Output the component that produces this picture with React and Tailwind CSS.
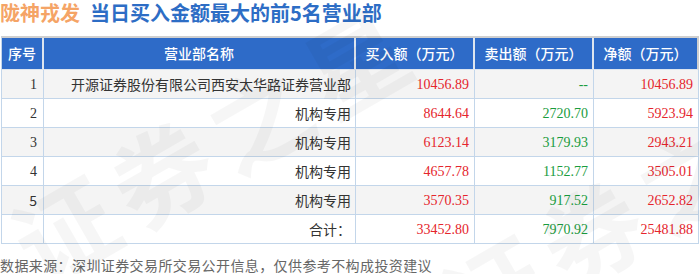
import React from "react";

const rows = [
  { no: "1", name: "开源证券股份有限公司西安太华路证券营业部", buy: "10456.89", sell: "--", net: "10456.89" },
  { no: "2", name: "机构专用", buy: "8644.64", sell: "2720.70", net: "5923.94" },
  { no: "3", name: "机构专用", buy: "6123.14", sell: "3179.93", net: "2943.21" },
  { no: "4", name: "机构专用", buy: "4657.78", sell: "1152.77", net: "3505.01" },
  { no: "5", name: "机构专用", buy: "3570.35", sell: "917.52", net: "2652.82", sansNo: true },
];

const cjk = "font-['Noto_Sans_CJK_SC',sans-serif]";
const serif = "font-['Liberation_Serif','Noto_Sans_CJK_SC',serif]";
const cols = "grid grid-cols-[42px_312px_119px_119px_105px]";

// faint diagonal site watermark over the table
const Watermark = ({ className }) => (
  <div
    aria-hidden="true"
    className={`absolute text-[100px] font-bold leading-none whitespace-nowrap text-black/[0.035] -rotate-[30deg] pointer-events-none select-none tracking-[12px] ${cjk} ${className}`}
  >
    证券之星
  </div>
);

export default function App() {
  return (
    <div className={`relative w-[700px] h-[274px] bg-white overflow-hidden ${cjk}`}>
      {/* title */}
      <div className="h-[26px] flex items-center gap-[10px] text-[20px] leading-[26px] font-bold">
        <span className="text-[#f5a466]">陇神戎发</span>
        <span className="text-[#2d6dc5]">当日买入金额最大的前5名营业部</span>
      </div>
      <div className="h-[10px]" />

      {/* table */}
      <div className="ml-px w-[698px] border-t-2 border-[#cfcfcf] border-l border-l-[#c3d6ea] text-[14px]">
        <div className={`${cols} h-[32px] bg-[#2e6bc8] text-white font-medium text-[14px]`}>
          {["序号", "营业部名称", "买入额（万元）", "卖出额（万元）", "净额（万元）"].map((h, i) => (
            <div
              key={h}
              className={`flex items-center justify-center border-r-2 border-[#dde5ef] border-b ${i === 4 ? "border-r-[#cfcfcf]" : ""}`}
            >
              {h}
            </div>
          ))}
        </div>
        {rows.map((r, i) => (
          <div key={r.no} className={`${cols} h-[29px] ${i % 2 === 0 ? "bg-[#f4f4f4]" : "bg-white"}`}>
            <div className={`flex items-center justify-end pr-[6px] text-[#333] border-r border-b border-[#c3d6ea] ${r.sansNo ? cjk : serif}`}>
              {r.no}
            </div>
            <div className="flex items-center justify-end pr-[4px] text-[#333] border-r border-b border-[#c3d6ea]">
              {r.name}
            </div>
            <div className={`flex items-center justify-end pr-[5px] text-[#e5252d] border-r border-b border-[#c3d6ea] ${serif}`}>
              {r.buy}
            </div>
            <div className={`flex items-center justify-end pr-[5px] text-[#1a9c3e] border-r border-b border-[#c3d6ea] ${serif}`}>
              {r.sell}
            </div>
            <div className={`flex items-center justify-end pr-[5px] text-[#e5252d] border-r border-b border-[#c3d6ea] ${serif}`}>
              {r.net}
            </div>
          </div>
        ))}
        <div className={`${cols} h-[29px] bg-white`}>
          <div className="border-r border-b border-[#c3d6ea]" />
          <div className="flex items-center justify-end pr-[4px] text-[#333] border-r border-b border-[#c3d6ea]">
            合计：
          </div>
          <div className={`flex items-center justify-end pr-[5px] text-[#e5252d] border-r border-b border-[#c3d6ea] ${serif}`}>
            33452.80
          </div>
          <div className={`flex items-center justify-end pr-[5px] text-[#1a9c3e] border-r border-b border-[#c3d6ea] ${serif}`}>
            7970.92
          </div>
          <div className={`flex items-center justify-end pr-[5px] text-[#e5252d] border-r border-b border-[#c3d6ea] ${serif}`}>
            25481.88
          </div>
        </div>
      </div>

      {/* source */}
      <div className="mt-[12px] text-[14px] leading-[18px] text-[#666] tracking-[0.4px]">
        数据来源：深圳证券交易所交易公开信息，仅供参考不构成投资建议
      </div>

      <Watermark className="left-[-10px] top-[90px]" />
      <Watermark className="left-[420px] top-[150px]" />
    </div>
  );
}
